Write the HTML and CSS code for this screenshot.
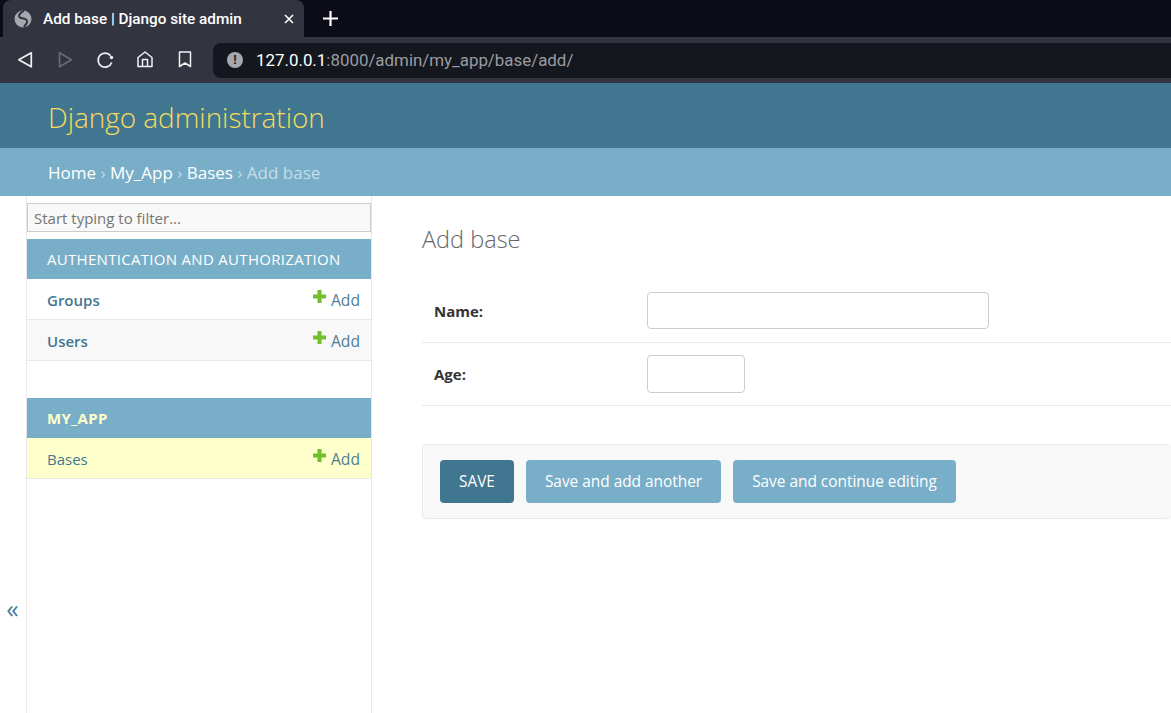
FILE: index.html
```html
<!DOCTYPE html>
<html lang="en">
<head>
    <meta charset="UTF-8">
    <title>Add base | Django site admin</title>
    <link rel="stylesheet" href="styles.css">
</head>
<body>
    <div class="tabstrip">
        <div class="tab">
            <svg class="globe" width="18" height="18" viewBox="0 0 18 18">
                <circle cx="9" cy="9" r="8.500" fill="#a6a8ae"/>
                <path d="M10 1C6 2 3 7 7 8c3 1 5 0 6 3 1 2-2 4-3 6" fill="none" stroke="#32343f" stroke-width="2"/>
            </svg>
            <span class="tab-title">Add base | Django site admin</span>
            <svg class="tab-close" width="10" height="10" viewBox="0 0 10 10">
                <path d="M1 1l8 8M9 1l-8 8" stroke="#fff" stroke-width="1.600"/>
            </svg>
        </div>
        <svg class="new-tab" width="15" height="15" viewBox="0 0 15 15">
            <path d="M7.500 0v15M0 7.500h15" stroke="#fff" stroke-width="2.200"/>
        </svg>
    </div>
    <div class="toolbar">
        <div class="tool-icons">
            <svg width="18" height="18" viewBox="0 0 18 18"><path d="M15.300 1.800L2.800 8.800l12.500 7z" fill="none" stroke="#f2f2f4" stroke-width="1.700" stroke-linejoin="round"/></svg>
            <svg width="18" height="18" viewBox="0 0 18 18"><path d="M3.500 1.800L15.500 8.800 3.500 15.800z" fill="none" stroke="#686a74" stroke-width="1.700" stroke-linejoin="round"/></svg>
            <svg width="18" height="18" viewBox="0 0 18 18"><path d="M15.700 11.500A7 7 0 1 1 14.500 4.600" fill="none" stroke="#f2f2f4" stroke-width="1.700"/><circle cx="15.500" cy="6.500" r="1.700" fill="#f2f2f4"/></svg>
            <svg width="18" height="18" viewBox="0 0 18 18"><path d="M2 6.500L9 1l7 5.500v9H2zM6.500 15.500v-7h5v7" fill="none" stroke="#f2f2f4" stroke-width="1.500" stroke-linejoin="round"/></svg>
            <svg width="18" height="18" viewBox="0 0 18 18"><path d="M3.500 1h11v14.500L9 12l-5.500 3.500z" fill="none" stroke="#f2f2f4" stroke-width="1.500" stroke-linejoin="round"/></svg>
        </div>
        <div class="urlbar">
            <span class="info-dot">!</span>
            <span class="url"><span class="url-host">127.0.0.1</span>:8000/admin/my_app/base/add/</span>
        </div>
    </div>

    <header class="site-header">Django administration</header>
    <div class="breadcrumbs">
        <a>Home</a> › <a>My_App</a> › <a>Bases</a> › Add base
    </div>

    <div class="page">
        <div class="nav-toggle">«</div>
        <nav class="sidebar">
            <input class="nav-filter" type="text" placeholder="Start typing to filter...">
            <div class="app-group">
                <div class="app-caption">AUTHENTICATION AND AUTHORIZATION</div>
                <div class="model-row">
                    <a class="model-name">Groups</a>
                    <a class="add-link"><svg class="plus" width="13" height="13" viewBox="0 0 13 13"><path d="M6.500 0v13M0 6.500h13" stroke="#70bf2b" stroke-width="4"/></svg>Add</a>
                </div>
                <div class="model-row alt">
                    <a class="model-name">Users</a>
                    <a class="add-link"><svg class="plus" width="13" height="13" viewBox="0 0 13 13"><path d="M6.500 0v13M0 6.500h13" stroke="#70bf2b" stroke-width="4"/></svg>Add</a>
                </div>
            </div>
            <div class="app-group">
                <div class="app-caption current">MY_APP</div>
                <div class="model-row selected">
                    <a class="model-name plain">Bases</a>
                    <a class="add-link"><svg class="plus" width="13" height="13" viewBox="0 0 13 13"><path d="M6.500 0v13M0 6.500h13" stroke="#70bf2b" stroke-width="4"/></svg>Add</a>
                </div>
            </div>
        </nav>
        <main class="content">
            <h1>Add base</h1>
            <div class="form-row first">
                <label>Name:</label>
                <input class="field-name" type="text">
            </div>
            <div class="form-row">
                <label>Age:</label>
                <input class="field-age" type="text">
            </div>
            <div class="submit-row">
                <button class="btn btn-default">SAVE</button>
                <button class="btn">Save and add another</button>
                <button class="btn">Save and continue editing</button>
            </div>
        </main>
    </div>
</body>
</html>
```

FILE: styles.css
```css
html, body {
    margin: 0;
    height: 713px;
    overflow: hidden;
}

body {
    font-family: "Open Sans", "Noto Sans", sans-serif;
    background-color: #fff;
    color: #333;
}

a {
    text-decoration: none;
}

/* browser chrome */
.tabstrip {
    height: 37px;
    background-color: #0c0c19;
    display: flex;
    align-items: center;
    padding-left: 3px;
}

.tab {
    width: 301px;
    height: 37px;
    box-sizing: border-box;
    background-color: #32343f;
    border-radius: 8px 8px 0 0;
    display: flex;
    align-items: center;
    padding: 0 10px 0 11px;
    color: #fff;
}

.globe {
    flex: none;
}

.tab-title {
    font-family: "Roboto", sans-serif;
    font-size: 15.300px;
    font-weight: 500;
    margin-left: 11px;
    flex: 1;
    white-space: nowrap;
}

.new-tab {
    margin-left: 19px;
}

.toolbar {
    height: 46px;
    background-color: #32343f;
    display: flex;
    align-items: center;
}

.tool-icons {
    width: 213px;
    display: flex;
    align-items: center;
    gap: 22px;
    padding-left: 16px;
    box-sizing: border-box;
}

.urlbar {
    flex: 1;
    height: 35px;
    background-color: #15171e;
    border-radius: 8px 0 0 8px;
    display: flex;
    align-items: center;
    padding-left: 14px;
}

.info-dot {
    width: 16px;
    height: 16px;
    border-radius: 50%;
    background-color: #a6a8ae;
    color: #15171e;
    font-family: "Liberation Sans", sans-serif;
    font-size: 12px;
    font-weight: bold;
    line-height: 16px;
    text-align: center;
}

.url {
    font-family: "Roboto", sans-serif;
    font-size: 16.900px;
    color: #9a9ca2;
    margin-left: 13px;
}

.url-host {
    color: #fff;
}

/* admin header */
.site-header {
    height: 65px;
    box-sizing: border-box;
    background-color: #417690;
    color: #f5dd5d;
    font-size: 27.900px;
    font-weight: 300;
    line-height: 68px;
    padding-left: 48px;
}

.breadcrumbs {
    height: 48px;
    box-sizing: border-box;
    background-color: #79aec8;
    color: #c4dce8;
    font-size: 17px;
    line-height: 50px;
    padding-left: 48px;
}

.breadcrumbs a {
    color: #fff;
}

.page {
    display: flex;
    height: 517px;
}

.nav-toggle {
    width: 25px;
    padding-right: 1px;
    border-right: 1px solid #e8e8e8;
    color: #447e9b;
    font-size: 25px;
    line-height: 28px;
    text-align: center;
    padding-top: 398px;
}

.sidebar {
    width: 344px;
    flex: none;
    border-right: 1px solid #e8e8e8;
}

.nav-filter {
    display: block;
    width: 344px;
    height: 29px;
    box-sizing: border-box;
    margin: 7px 0 7px;
    padding: 0 6px;
    font-family: inherit;
    font-size: 15px;
    background-color: #f8f8f8;
    border: 1px solid #ccc;
    border-radius: 0;
}

.nav-filter::placeholder {
    color: #757575;
}

.app-group {
    margin-bottom: 37px;
}

.app-caption {
    height: 40px;
    background-color: #79aec8;
    color: #fff;
    font-size: 15px;
    line-height: 40px;
    padding-left: 20px;
    letter-spacing: 0.3px;
}

.app-caption.current {
    color: #ffffcc;
    font-weight: 700;
}

.model-row {
    height: 41px;
    box-sizing: border-box;
    border-bottom: 1px solid #e8e8e8;
    display: flex;
    justify-content: space-between;
    align-items: center;
    padding: 2px 11px 0 20px;
    font-size: 15px;
}

.model-row.alt {
    background-color: #f8f8f8;
}

.model-row.selected {
    background-color: #ffffcc;
}

.model-name {
    color: #447792;
    font-weight: 600;
}

.model-name.plain {
    font-weight: 400;
}

.add-link {
    color: #4f7d96;
    font-size: 15.700px;
    display: flex;
    align-items: center;
}

.plus {
    margin-right: 5px;
    position: relative;
    top: -4px;
}

/* form */
.content {
    flex: 1;
    padding: 0 0 0 50px;
    min-width: 0;
}

.content h1 {
    margin: 27px 0 26px;
    font-size: 23.500px;
    font-weight: 300;
    line-height: 32px;
    color: #666;
}

.form-row {
    height: 63px;
    box-sizing: border-box;
    border-bottom: 1px solid #e8e8e8;
    display: flex;
    align-items: center;
    padding-left: 12px;
}

.form-row.first {
    height: 62px;
    padding-bottom: 2px;
}

.form-row label {
    width: 213px;
    font-size: 15px;
    font-weight: 700;
}

.form-row input {
    height: 38px;
    box-sizing: border-box;
    border: 1px solid #ccc;
    border-radius: 4px;
    background-color: #fff;
}

.form-row input.field-name {
    width: 342px;
    height: 37px;
}

.field-age {
    width: 98px;
}

.submit-row {
    margin-top: 38px;
    height: 75px;
    box-sizing: border-box;
    background-color: #f8f8f8;
    border: 1px solid #eaeaea;
    border-right: none;
    border-radius: 4px;
    display: flex;
    align-items: center;
    gap: 12px;
    padding-left: 17px;
}

.btn {
    height: 43px;
    padding: 0 19px;
    border: none;
    border-radius: 4px;
    background-color: #79aec8;
    color: #fff;
    font-family: inherit;
    font-size: 15.400px;
}

.btn-default {
    background-color: #417690;
}
```
